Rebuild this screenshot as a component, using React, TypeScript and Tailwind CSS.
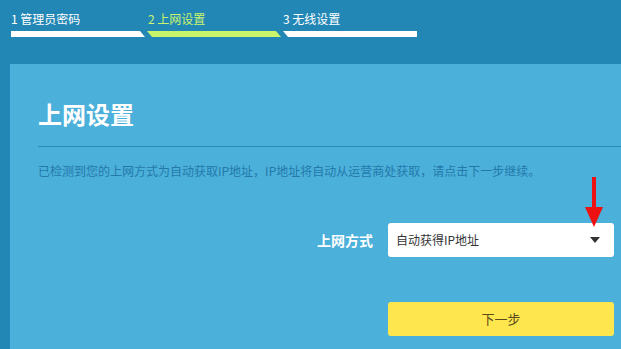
import React from "react";

const font = { fontFamily: '"Noto Sans CJK SC", "Noto Sans", sans-serif' };

export default function App() {
  return (
    <div className="w-[621px] h-[349px] overflow-hidden bg-[#2387b5] flex flex-col" style={font}>
      <div className="flex gap-[2px] pl-[11px] pt-[10px]">
        <div className="w-[134px] flex flex-col">
          <span className="text-[12px] leading-[18px] text-white">1 管理员密码</span>
          <div className="mt-[3px] h-[6px] bg-white [clip-path:polygon(0_0,calc(100%-5px)_0,100%_100%,0_100%)]" />
        </div>
        <div className="w-[134px] flex flex-col">
          <span className="text-[12px] leading-[18px] text-[#c9f46c] pl-[1px]">2 上网设置</span>
          <div className="mt-[3px] h-[6px] bg-[#c9f46c] [clip-path:polygon(0_0,calc(100%-5px)_0,100%_100%,5px_100%)]" />
        </div>
        <div className="w-[134px] flex flex-col">
          <span className="text-[12px] leading-[18px] text-white">3 无线设置</span>
          <div className="mt-[3px] h-[6px] bg-white [clip-path:polygon(0_0,100%_0,100%_100%,5px_100%)]" />
        </div>
      </div>
      <div className="ml-[10px] mt-[27px] flex-1 bg-[#4bb0da] pl-[28px] pt-[34px]">
        <h1 className="text-[24px] leading-[32px] font-bold text-white">上网设置</h1>
        <div className="mt-[16px] h-px bg-[#2b8abb]" />
        <p className="mt-[15px] text-[12px] leading-[18px] text-[#2479aa]">
          已检测到您的上网方式为自动获取IP地址，IP地址将自动从运营商处获取，请点击下一步继续。
        </p>
        <div className="mt-[43px] flex items-center">
          <span className="ml-[279px] w-[71px] text-[14px] font-bold text-white">上网方式</span>
          <div className="relative w-[226px] h-[34px] bg-white rounded-[3px] flex items-center justify-between pl-[8px] pr-[14px]">
            <span className="text-[12px] text-[#333]">自动获得IP地址</span>
            <svg width="10" height="6" viewBox="0 0 10 6"><path d="M0 0h10L5 6z" fill="#333" /></svg>
            <svg className="absolute right-[10px] top-[-46px]" width="20" height="52" viewBox="0 0 20 52">
              <rect x="8" y="0" width="4" height="32" fill="#ee1111" />
              <path d="M1 30h18L10 50z" fill="#ee1111" />
            </svg>
          </div>
        </div>
        <div className="mt-[45px] ml-[350px] w-[226px] h-[34px] bg-[#fde64e] rounded-[3px] flex items-center justify-center">
          <span className="text-[13px] text-[#5a4a1a]">下一步</span>
        </div>
      </div>
    </div>
  );
}
